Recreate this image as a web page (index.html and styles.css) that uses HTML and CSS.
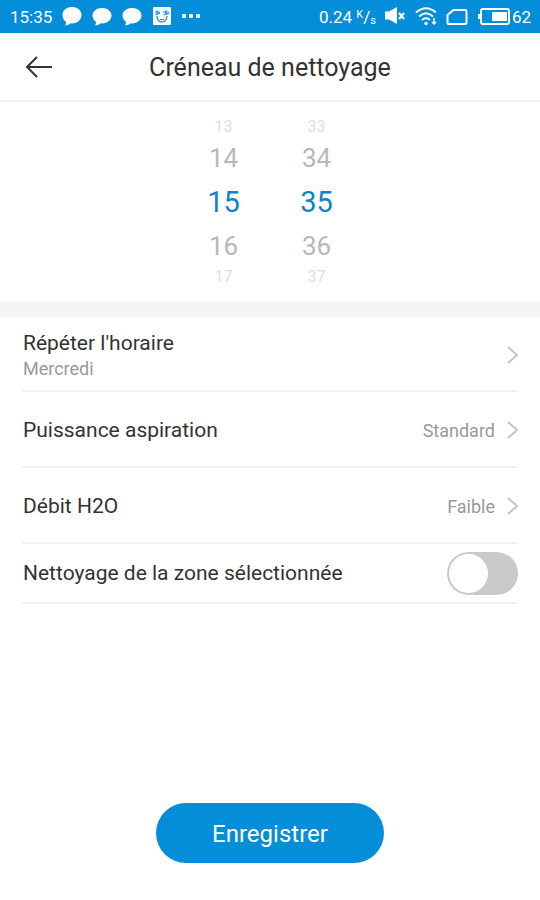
FILE: index.html
```html
<!doctype html>

<html lang="fr">

<head>
	<meta charset="utf-8">
	<meta name="viewport" content="width=device-width, initial-scale=1.0">
	<title>Créneau de nettoyage</title>
	<link rel="stylesheet" href="styles.css">
</head>

<body>
	<div class="statusbar">
		<div class="status-left">
			<span>15:35</span>
			<svg width="20" height="20" viewBox="0 0 20 20" fill="currentColor"><path d="M10 0C15.500 0 19.500 3.500 19.500 8S15.500 16.500 10 16.500L8.500 16.300C7 17.800 5 18.500 2.800 18.300C4 17.200 4.200 16 3.800 14.700C2 13.200 0.500 11 0.500 8C0.500 3.500 4.500 0 10 0Z"/></svg>
			<svg width="20" height="20" viewBox="0 0 20 20" fill="currentColor"><path d="M10 1C15.500 1 19.500 4.300 19.500 8.500S15.500 16.500 10 16.500L8.500 16.300C7 17.800 5 18.500 2.800 18.300C4 17.200 4.200 16 3.800 14.700C2 13.200 0.500 11.200 0.500 8.500C0.500 4.300 4.500 1 10 1Z"/></svg>
			<svg width="20" height="20" viewBox="0 0 20 20" fill="currentColor"><path d="M10 1C15.500 1 19.500 4.300 19.500 8.500S15.500 16.500 10 16.500L8.500 16.300C7 17.800 5 18.500 2.800 18.300C4 17.200 4.200 16 3.800 14.700C2 13.200 0.500 11.200 0.500 8.500C0.500 4.300 4.500 1 10 1Z"/></svg>
			<svg width="20" height="20" viewBox="0 0 20 20"><rect x="1" y="0" width="18" height="18" rx="1" fill="currentColor"/><path d="M3 5h5M5 3.500v4M3.500 8L8 6M11 5h6M14 3.500v4M11.500 8L17 6.500M5 9c0 8 10 8 10 0M8 12.500h4" fill="none" stroke="#048dd8" stroke-width="1.200"/></svg>
			<svg width="20" height="20" viewBox="0 0 20 20" fill="currentColor"><rect x="0" y="7" width="4" height="4" rx="1"/><rect x="7" y="7" width="4" height="4" rx="1"/><rect x="14" y="7" width="4" height="4" rx="1"/></svg>
		</div>
		<div class="status-right">
			<span class="rate">0.24 <sup>K</sup>/<sub>s</sub></span>
			<svg width="20" height="20" viewBox="0 0 20 20" fill="none" stroke="currentColor"><path d="M-1 4.500h4l8-4.500v17l-8-4.500h-4z" fill="currentColor" stroke="none"/><path d="M13 6l5 6M18 6l-5 6" stroke-width="2"/></svg>
			<svg width="22" height="20" viewBox="0 0 22 20" fill="none" stroke="currentColor" stroke-width="2"><path d="M0 5.500Q10-3 20 5.500M3 9.500Q10 3 17 9.500M6 13Q10 9.500 14 13"/><circle cx="10" cy="16.500" r="1.700" fill="currentColor" stroke="none"/><path d="M18 11v6M16 15l2 2 2-2" stroke-width="1.500"/></svg>
			<svg width="20" height="20" viewBox="0 0 20 20" fill="none" stroke="currentColor" stroke-width="2"><path d="M5 3h11.500q1.500 0 1.500 1.500v11q0 1.500-1.500 1.500H0q-1 0-1-1.500V8z" transform="translate(.5)"/></svg>
			<div class="battery">
				<svg width="34" height="20" viewBox="0 0 34 20"><path d="M0 7h2v5H0z" fill="currentColor"/><rect x="3" y="2" width="28" height="15" rx="2" fill="none" stroke="currentColor" stroke-width="2"/><path d="M14 5h15v9H14z" fill="currentColor"/></svg>
				<span>62</span>
			</div>
		</div>
	</div>

	<header class="header">
		<button class="back" aria-label="Retour">
			<svg width="28" height="24" viewBox="0 0 28 24" fill="none" stroke="currentColor" stroke-width="2"><path d="M27 12H2M12 2L2 12l10 10"/></svg>
		</button>
		<h1>Créneau de nettoyage</h1>
	</header>

	<main>
		<div class="picker">
			<ul class="wheel">
				<li class="far">13</li>
				<li>14</li>
				<li class="selected">15</li>
				<li>16</li>
				<li class="far">17</li>
			</ul>
			<ul class="wheel">
				<li class="far">33</li>
				<li>34</li>
				<li class="selected">35</li>
				<li>36</li>
				<li class="far">37</li>
			</ul>
		</div>

		<div class="settings">
			<button class="row">
				<span class="label">Répéter l'horaire<small>Mercredi</small></span>
				<svg class="chevron" width="12" height="20" viewBox="0 0 12 20"><path d="M2 2l9 8-9 8"/></svg>
			</button>
			<button class="row">
				<span class="label">Puissance aspiration</span>
				<span class="value">Standard</span>
				<svg class="chevron" width="12" height="20" viewBox="0 0 12 20"><path d="M2 2l9 8-9 8"/></svg>
			</button>
			<button class="row">
				<span class="label">Débit H2O</span>
				<span class="value">Faible</span>
				<svg class="chevron" width="12" height="20" viewBox="0 0 12 20"><path d="M2 2l9 8-9 8"/></svg>
			</button>
			<div class="row row-switch">
				<label class="label" for="zone">Nettoyage de la zone sélectionnée</label>
				<input class="switch" id="zone" type="checkbox" role="switch">
			</div>
		</div>
	</main>

	<footer class="footer">
		<button class="save">Enregistrer</button>
	</footer>
</body>

</html>
```

FILE: styles.css
```css
html {
	box-sizing: border-box;
	font-size: 16px;
	font-family: Roboto, "Liberation Sans", sans-serif;
}

*,
*:before,
*:after {
	box-sizing: inherit;
}

body,
h1,
ul {
	margin: 0;
	padding: 0;
	font-weight: normal;
}

body {
	display: flex;
	flex-direction: column;
	min-height: 100vh;
	background: #fff;
	color: #333;
}

button {
	border: 0;
	padding: 0;
	background: none;
	color: inherit;
	font-family: inherit;
	cursor: pointer;
}

svg {
	display: block;
	flex-shrink: 0;
	overflow: visible;
}

.statusbar {
	display: flex;
	align-items: center;
	justify-content: space-between;
	height: 33px;
	padding: 0 9px 0 10px;
	background: #048dd8;
	color: #fff;
	font-size: 17px;
}

.status-left,
.status-right {
	display: flex;
	align-items: center;
	gap: 10px;
}

.rate sup,
.rate sub {
	font-size: 11px;
	line-height: 1;
}

.rate sup {
	vertical-align: 5px;
}

.rate sub {
	vertical-align: -1px;
}

.battery {
	display: flex;
	align-items: center;
}

.header {
	display: grid;
	grid-template-columns: 28px 1fr 28px;
	align-items: center;
	height: 69px;
	padding: 0 25px;
	border-bottom: 2px solid #f2f2f2;
}

.header h1 {
	padding-top: 2px;
	font-size: 25px;
	text-align: center;
}

.picker {
	display: flex;
	justify-content: center;
	gap: 33px;
	height: 215px;
	padding-top: 16px;
	border-bottom: 16px solid #f4f4f4;
}

.wheel {
	width: 60px;
	list-style: none;
	text-align: center;
}

.wheel li {
	color: #b8b8b8;
	font-size: 26px;
	line-height: 44px;
}

.wheel .far {
	color: #dedede;
	font-size: 16px;
	line-height: 18px;
}

.wheel .selected {
	color: #0a86c8;
	font-size: 29px;
}

.settings {
	padding: 0 22px;
}

.row {
	display: flex;
	align-items: center;
	width: 100%;
	min-height: 76px;
	padding-top: 2px;
	border-bottom: 2px solid #f2f2f2;
	text-align: left;
}

.row:first-child {
	min-height: 75px;
}

.row-switch {
	min-height: 60px;
	padding-top: 0;
}

.label {
	flex: 1;
	padding-left: 1px;
	font-size: 21px;
	line-height: 28px;
}

.label small {
	display: block;
	color: #999;
	font-size: 18px;
	line-height: 24px;
}

.value {
	margin-right: 11px;
	color: #999;
	font-size: 18px;
}

.chevron {
	fill: none;
	stroke: #c4c4c4;
	stroke-width: 2;
}

.switch {
	appearance: none;
	width: 71px;
	height: 43px;
	margin: 0;
	padding: 2px;
	border-radius: 22px;
	background: #c9c9c9;
	cursor: pointer;
}

.switch:before {
	content: "";
	display: block;
	width: 39px;
	height: 39px;
	border-radius: 50%;
	background: #fff;
}

.switch:checked {
	background: #048dd8;
}

.switch:checked:before {
	margin-left: auto;
}

.footer {
	margin-top: auto;
	padding: 24px 24px 37px;
	text-align: center;
}

.save {
	width: 228px;
	height: 60px;
	padding-top: 2px;
	border-radius: 30px;
	background: #048dd8;
	color: #fff;
	font-size: 24px;
}
```
